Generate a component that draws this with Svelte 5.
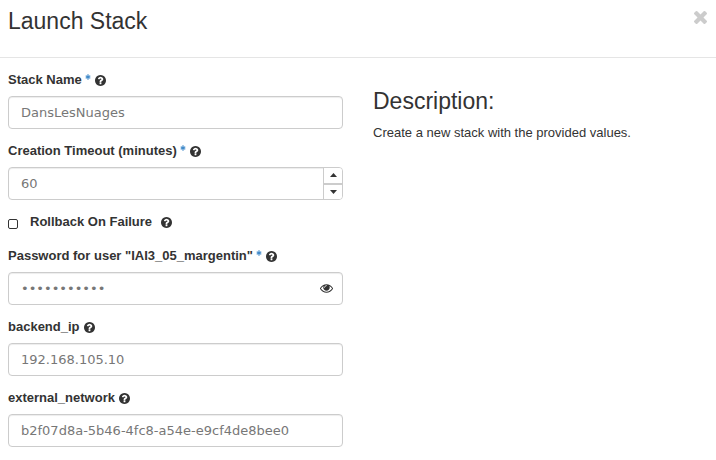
<script>
  const fields = [
    { label: 'Stack Name', value: 'DansLesNuages', required: true },
    { label: 'Creation Timeout (minutes)', value: '60', required: true, kind: 'number' },
    { label: 'Rollback On Failure', kind: 'checkbox' },
    { label: 'Password for user "IAI3_05_margentin"', value: '•••••••••••', required: true, kind: 'password' },
    { label: 'backend_ip', value: '192.168.105.10' },
    { label: 'external_network', value: 'b2f07d8a-5b46-4fc8-a54e-e9cf4de8bee0' }
  ];
</script>

{#snippet help()}
  <svg class="help" viewBox="128 128 1536 1536"><path d="M1024 1376v-192q0-14-9-23t-23-9h-192q-14 0-23 9t-9 23v192q0 14 9 23t23 9h192q14 0 23-9t9-23zm256-672q0-88-55.5-163t-138.5-116-170-41q-243 0-371 213-15 24 8 42l132 100q7 6 19 6 16 0 25-12 53-68 86-92 34-24 86-24 48 0 85.5 26t37.5 59q0 38-20 61t-68 45q-63 28-115.5 86.5t-52.5 125.5v36q0 14 9 23t23 9h192q14 0 23-9t9-23q0-19 21.5-49.5t54.5-49.5q32-18 49-28.5t46-35 44.5-48 28-60.5 12.5-81zm384 192q0 209-103 385.5t-279.5 279.5-385.5 103-385.5-103-279.5-279.5-103-385.5 103-385.5 279.5-279.5 385.5-103 385.5 103 279.5 279.5 103 385.5z" /></svg>
{/snippet}

<div class="modal">
  <header>
    <h3>Launch Stack</h3>
    <button class="close" aria-label="Close">
      <svg viewBox="302 434 1188 1188"><path transform="translate(0 68)" d="M1490 1322q0 40-28 68l-136 136q-28 28-68 28t-68-28l-294-294-294 294q-28 28-68 28t-68-28l-136-136q-28-28-28-68t28-68l294-294-294-294q-28-28-28-68t28-68l136-136q28-28 68-28t68 28l294 294 294-294q28-28 68-28t68 28l136 136q28 28 28 68t-28 68l-294 294 294 294q28 28 28 68z" /></svg>
    </button>
  </header>
  <div class="body">
    <form>
      {#each fields as field}
        {#if field.kind === 'checkbox'}
          <label class="check">
            <span class="box"></span>
            <span>{field.label}</span>
            {@render help()}
          </label>
        {:else}
          <div class="group">
            <div class="label">
              <span>{field.label}</span>
              {#if field.required}
                <svg class="star" viewBox="0 0 6 6"><path d="M3 .3v5.4M.7 1.65l4.6 2.7M5.3 1.65L.7 4.35" /></svg>
              {/if}
              {@render help()}
            </div>
            <div class="control">
              <span class="value">{field.value}</span>
              {#if field.kind === 'number'}
                <div class="spinner">
                  <span><svg viewBox="0 0 7 4"><path d="M0 4L3.5 0 7 4z" /></svg></span>
                  <span><svg viewBox="0 0 7 4"><path d="M0 0h7L3.5 4z" /></svg></span>
                </div>
              {:else if field.kind === 'password'}
                <svg class="eye" viewBox="0 384 1792 1152"><path d="M1664 960q-152-236-381-353 61 104 61 225 0 185-131.5 316.5t-316.5 131.5-316.5-131.5-131.5-316.5q0-121 61-225-229 117-381 353 133 205 333.5 326.5t434.5 121.5 434.5-121.5 333.5-326.5zm-720-384q0-20-14-34t-34-14q-125 0-214.5 89.5t-89.5 214.5q0 20 14 34t34 14 34-14 14-34q0-86 61-147t147-61q20 0 34-14t14-34zm848 384q0 34-20 69-140 230-376.5 368.5t-499.5 138.5-499.5-139-376.5-368q-20-35-20-69t20-69q140-229 376.5-368t499.5-139 499.5 139 376.5 368q20 35 20 69z" /></svg>
              {/if}
            </div>
          </div>
        {/if}
      {/each}
    </form>
    <section>
      <h3>Description:</h3>
      <p>Create a new stack with the provided values.</p>
    </section>
  </div>
</div>

<style>
  :global(body) {
    background: #fff;
  }
  .modal {
    height: 460px;
    overflow: hidden;
    font: 13px/18px "Liberation Sans", Arial, sans-serif;
    color: #333;
  }
  svg {
    display: block;
    fill: currentColor;
  }
  header {
    display: flex;
    justify-content: space-between;
    align-items: flex-start;
    box-sizing: border-box;
    height: 58px;
    padding: 9px 9px 0 8px;
    border-bottom: 1px solid #e5e5e5;
  }
  h3 {
    margin: 0;
    font-size: 23px;
    line-height: 25px;
    font-weight: 400;
  }
  .close {
    margin: 2px 0 0;
    padding: 0;
    border: 0;
    background: none;
    color: #ccc;
  }
  .close svg {
    width: 13px;
    height: 13px;
  }
  .body {
    display: flex;
    gap: 30px;
    padding: 13px 8px 0;
  }
  form {
    width: 335px;
  }
  .group {
    height: 71px;
  }
  .label,
  .check {
    display: flex;
    align-items: center;
    height: 18px;
    font-weight: 700;
    white-space: nowrap;
  }
  .help {
    width: 11px;
    height: 11px;
    margin-left: 4px;
  }
  .star {
    width: 6px;
    height: 6px;
    margin: -6px 0 0 3px;
    fill: none;
    stroke: #428bca;
    stroke-width: 1.2;
  }
  .check {
    height: 18px;
    margin-bottom: 16px;
  }
  .box {
    box-sizing: border-box;
    width: 10px;
    height: 10px;
    margin: 3px 12px 0 0;
    border: 1px solid #333;
    border-radius: 2px;
  }
  .check .help {
    margin-left: 9px;
  }
  .control {
    display: flex;
    align-items: center;
    box-sizing: border-box;
    height: 33px;
    margin-top: 7px;
    border: 1px solid #ccc;
    border-radius: 4px;
    box-shadow: inset 0 1px 1px rgba(0, 0, 0, 0.075);
    overflow: hidden;
  }
  .value {
    flex: 1;
    padding-left: 12px;
    font-family: "DejaVu Sans", sans-serif;
    color: #777;
  }
  .spinner {
    display: flex;
    flex-direction: column;
    align-self: stretch;
    width: 18px;
    border-left: 1px solid #ccc;
    background: #fff;
  }
  .spinner span {
    flex: 1;
    display: grid;
    place-items: center;
  }
  .spinner span + span {
    border-top: 2px solid #ccc;
  }
  .spinner svg {
    width: 7px;
    height: 4px;
  }
  .eye {
    width: 13px;
    height: 9px;
    margin-right: 9px;
  }
  section {
    padding-top: 18px;
  }
  section p {
    margin: 10px 0 0;
  }
</style>
